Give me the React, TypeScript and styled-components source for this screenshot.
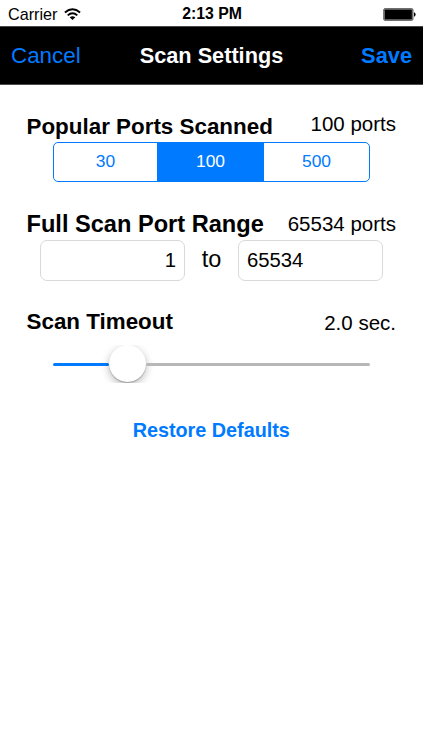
import React, { useState } from 'react';
import styled, { createGlobalStyle } from 'styled-components';

const BLUE = '#007aff';

const GlobalStyle = createGlobalStyle`
  *, *::before, *::after { box-sizing: border-box; }
  body { margin: 0; background: #fff; }
  button, input { font: inherit; color: inherit; margin: 0; padding: 0; border: 0; background: none; outline: none; }
`;

const Screen = styled.div`
  width: 423px;
  height: 750px;
  overflow: hidden;
  background: #fff;
  color: #000;
  font-family: 'Liberation Sans', Arial, sans-serif;
  line-height: 1;
  white-space: nowrap;
`;

const StatusBar = styled.header`
  height: 26px;
  padding: 0 7px 0 8px;
  display: grid;
  grid-template-columns: 1fr auto 1fr;
  align-items: center;
`;

const Carrier = styled.div`
  display: flex;
  align-items: center;
  gap: 7px;
  font-size: 16.2px;
  line-height: 26px;
`;

const Clock = styled.div`
  font-size: 15.8px;
  line-height: 28px;
  font-weight: 700;
`;

const Battery = styled.svg`
  justify-self: end;
`;

const NavBar = styled.nav`
  height: 59px;
  padding: 0 11px;
  display: grid;
  grid-template-columns: 1fr auto 1fr;
  align-items: center;
  background: #000;
  border-top: 1px solid #4a4a4a;
  border-bottom: 1px solid #4a4a4a;
`;

const NavButton = styled.button<{ $strong?: boolean }>`
  justify-self: ${p => (p.$strong ? 'end' : 'start')};
  padding-top: ${p => (p.$strong ? 0 : 2)}px;
  color: ${BLUE};
  font-size: ${p => (p.$strong ? 21.8 : 22.4)}px;
  font-weight: ${p => (p.$strong ? 700 : 400)};
`;

const Title = styled.h1`
  margin: 0;
  color: #fff;
  font-size: 21.7px;
  font-weight: 700;
`;

const Content = styled.main`
  padding: 29px 27px 0 26.5px;
`;

const Section = styled.section<{ $height: number }>`
  height: ${p => p.$height}px;
`;

const SectionHead = styled.div<{ $height: number }>`
  height: ${p => p.$height}px;
  display: flex;
  justify-content: space-between;
  align-items: flex-start;
`;

const Heading = styled.h2<{ $size?: number }>`
  margin: 0;
  font-size: ${p => p.$size ?? 22.4}px;
  line-height: 26px;
  font-weight: 700;
`;

const Value = styled.span<{ $drop?: number }>`
  padding-top: ${p => p.$drop ?? 0}px;
  font-size: 20.5px;
  line-height: 20px;
`;

const Segments = styled.div`
  width: 317px;
  height: 40px;
  margin-left: 26.5px;
  display: grid;
  grid-template-columns: 103px 107px 1fr;
  border: 1px solid ${BLUE};
  border-radius: 5px;
  overflow: hidden;
`;

const Segment = styled.button<{ $active: boolean }>`
  font-size: 17.4px;
  padding-bottom: 1px;
  color: ${p => (p.$active ? '#fff' : BLUE)};
  background: ${p => (p.$active ? BLUE : 'transparent')};
`;

const RangeRow = styled.div`
  display: grid;
  grid-template-columns: 145px 53px 145px;
  margin-left: 13.5px;
`;

const PortInput = styled.input<{ $align: 'left' | 'right' }>`
  width: 100%;
  height: 41px;
  padding: 0 8px;
  font-size: 20.3px;
  text-align: ${p => p.$align};
  border: 1px solid #d9d9d9;
  border-radius: 7px;
`;

const Between = styled.span`
  text-align: center;
  font-size: 23.5px;
  line-height: 39px;
`;

const Slider = styled.div`
  height: 38px;
  width: 317px;
  margin-left: 26.5px;
  display: flex;
  align-items: center;
  overflow: hidden;
`;

const Track = styled.div<{ $filled?: boolean }>`
  width: ${p => (p.$filled ? '56px' : 'auto')};
  flex: ${p => (p.$filled ? 'none' : 1)};
  height: 3px;
  margin-top: 1px;
  border-radius: 2px;
  background: ${p => (p.$filled ? BLUE : '#b7b7b7')};
`;

const Thumb = styled.div`
  flex: none;
  width: 37px;
  height: 37px;
  margin-top: -1px;
  border-radius: 50%;
  background: #fff;
  box-shadow: 0 1px 1px rgba(0, 0, 0, 0.25), 0 3px 9px rgba(0, 0, 0, 0.28);
`;

const Restore = styled.button`
  display: block;
  margin: 35px auto 0;
  color: ${BLUE};
  font-size: 19.8px;
  line-height: 24px;
  font-weight: 700;
`;

const WifiIcon = () => (
  <svg width="17" height="13" viewBox="0 0 17 13" fill="none" stroke="#000" strokeWidth="1.9">
    <path d="M.9 4.4Q8.5-1.8 16.1 4.4" />
    <path d="M3.7 7.4Q8.5 3.3 13.3 7.4" />
    <path d="M8.5 12L5.7 9.2Q8.5 7.1 11.3 9.2Z" fill="#000" stroke="none" />
  </svg>
);

const BatteryIcon = () => (
  <Battery width="33" height="13" viewBox="0 0 33 13">
    <rect x="0.7" y="0.6" width="29.3" height="11.8" rx="1.4" fill="#777" stroke="#666" strokeWidth="1" />
    <rect x="1.9" y="1.8" width="26.9" height="9.4" rx="0.4" fill="#000" />
    <path d="M31 4.3Q32.6 4.6 32.6 6.5T31 8.7Z" fill="#000" />
  </Battery>
);

export default function App() {
  const [ports, setPorts] = useState(100);
  const [from, setFrom] = useState('1');
  const [to, setTo] = useState('65534');

  return (
    <Screen>
      <GlobalStyle />
      <StatusBar>
        <Carrier>Carrier<WifiIcon /></Carrier>
        <Clock>2:13 PM</Clock>
        <BatteryIcon />
      </StatusBar>
      <NavBar>
        <NavButton>Cancel</NavButton>
        <Title>Scan Settings</Title>
        <NavButton $strong>Save</NavButton>
      </NavBar>
      <Content>
        <Section $height={97}>
          <SectionHead $height={28}>
            <Heading>Popular Ports Scanned</Heading>
            <Value>{ports} ports</Value>
          </SectionHead>
          <Segments>
            {[30, 100, 500].map(n => (
              <Segment key={n} $active={n === ports} onClick={() => setPorts(n)}>{n}</Segment>
            ))}
          </Segments>
        </Section>
        <Section $height={98}>
          <SectionHead $height={29}>
            <Heading $size={23.6}>Full Scan Port Range</Heading>
            <Value $drop={3}>65534 ports</Value>
          </SectionHead>
          <RangeRow>
            <PortInput $align="right" value={from} onChange={e => setFrom(e.target.value)} />
            <Between>to</Between>
            <PortInput $align="left" value={to} onChange={e => setTo(e.target.value)} />
          </RangeRow>
        </Section>
        <SectionHead $height={36}>
          <Heading>Scan Timeout</Heading>
          <Value $drop={4}>2.0 sec.</Value>
        </SectionHead>
        <Slider>
          <Track $filled />
          <Thumb />
          <Track />
        </Slider>
        <Restore>Restore Defaults</Restore>
      </Content>
    </Screen>
  );
}
